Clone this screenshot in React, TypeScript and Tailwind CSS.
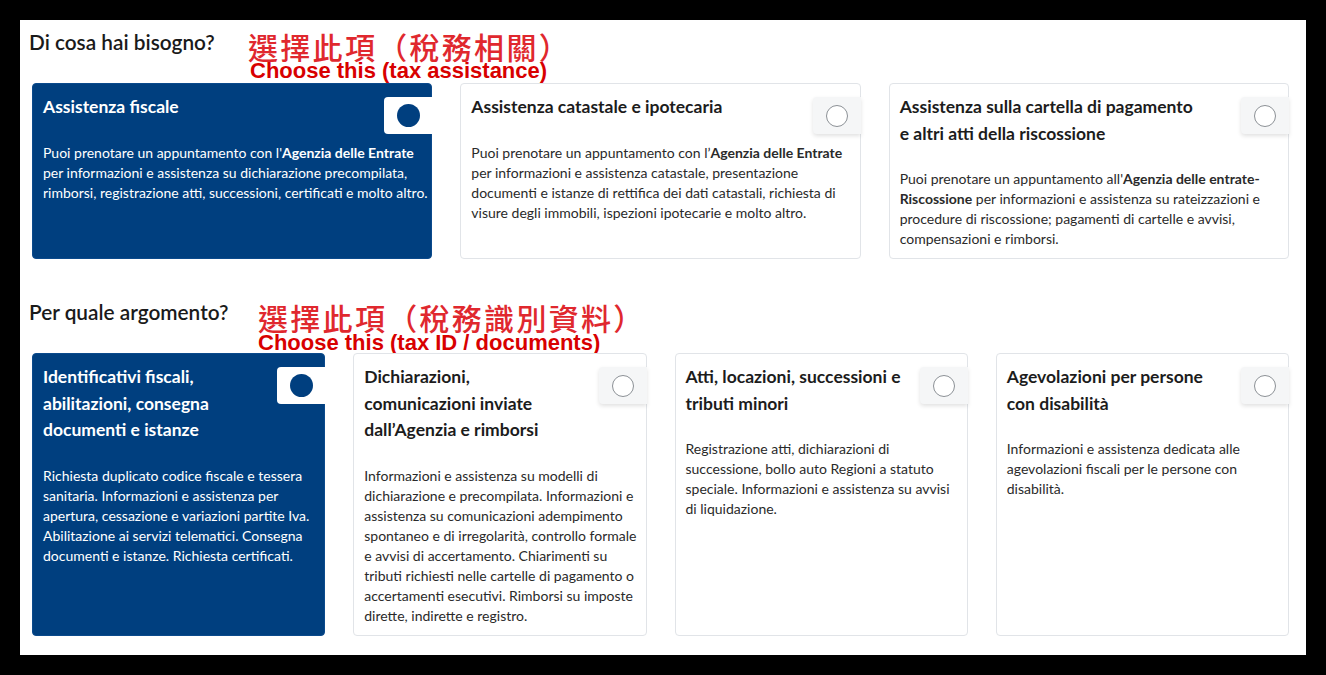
import React from "react";

type Line = React.ReactNode;
type Card = { title: string[]; desc: Line[]; selected?: boolean };

const row1: Card[] = [
  {
    selected: true,
    title: ["Assistenza fiscale"],
    desc: [
      <>Puoi prenotare un appuntamento con l'<b>Agenzia delle Entrate</b></>,
      "per informazioni e assistenza su dichiarazione precompilata,",
      "rimborsi, registrazione atti, successioni, certificati e molto altro.",
    ],
  },
  {
    title: ["Assistenza catastale e ipotecaria"],
    desc: [
      <>Puoi prenotare un appuntamento con l’<b>Agenzia delle Entrate</b></>,
      "per informazioni e assistenza catastale, presentazione",
      "documenti e istanze di rettifica dei dati catastali, richiesta di",
      "visure degli immobili, ispezioni ipotecarie e molto altro.",
    ],
  },
  {
    title: ["Assistenza sulla cartella di pagamento", "e altri atti della riscossione"],
    desc: [
      <>Puoi prenotare un appuntamento all'<b>Agenzia delle entrate-</b></>,
      <><b>Riscossione</b> per informazioni e assistenza su rateizzazioni e</>,
      "procedure di riscossione; pagamenti di cartelle e avvisi,",
      "compensazioni e rimborsi.",
    ],
  },
];

const row2: Card[] = [
  {
    selected: true,
    title: ["Identificativi fiscali,", "abilitazioni, consegna", "documenti e istanze"],
    desc: [
      "Richiesta duplicato codice fiscale e tessera",
      "sanitaria. Informazioni e assistenza per",
      "apertura, cessazione e variazioni partite Iva.",
      "Abilitazione ai servizi telematici. Consegna",
      "documenti e istanze. Richiesta certificati.",
    ],
  },
  {
    title: ["Dichiarazioni,", "comunicazioni inviate", "dall’Agenzia e rimborsi"],
    desc: [
      "Informazioni e assistenza su modelli di",
      "dichiarazione e precompilata. Informazioni e",
      "assistenza su comunicazioni adempimento",
      "spontaneo e di irregolarità, controllo formale",
      "e avvisi di accertamento. Chiarimenti su",
      "tributi richiesti nelle cartelle di pagamento o",
      "accertamenti esecutivi. Rimborsi su imposte",
      "dirette, indirette e registro.",
    ],
  },
  {
    title: ["Atti, locazioni, successioni e", "tributi minori"],
    desc: [
      "Registrazione atti, dichiarazioni di",
      "successione, bollo auto Regioni a statuto",
      "speciale. Informazioni e assistenza su avvisi",
      "di liquidazione.",
    ],
  },
  {
    title: ["Agevolazioni per persone", "con disabilità"],
    desc: [
      "Informazioni e assistenza dedicata alle",
      "agevolazioni fiscali per le persone con",
      "disabilità.",
    ],
  },
];

function CardView({ c }: { c: Card }) {
  return (
    <div
      className={
        c.selected
          ? "relative rounded-[4px] border border-[#0b4a8c] bg-[#003f7f] text-white pt-[10px] px-[10px] pb-[9px]"
          : "relative rounded-[4px] border border-[#e1e4e8] bg-white text-[#1c1c1c] pt-[10px] px-[10px] pb-[9px]"
      }
    >
      <div
        className={
          c.selected
            ? "absolute top-[13px] right-[-1px] w-[48px] h-[37px] rounded-l-[4px] bg-white flex items-center justify-center"
            : "absolute top-[13px] right-[-1px] w-[48px] h-[37px] rounded-l-[4px] bg-[#f5f6f7] shadow-[0_2px_4px_rgba(0,0,0,0.12)] flex items-center justify-center"
        }
      >
        {c.selected ? (
          <div className="w-[23px] h-[23px] rounded-full bg-[#003f7f]" />
        ) : (
          <div className="w-[22px] h-[22px] rounded-full border-[1.5px] border-[#8c9196] bg-white" />
        )}
      </div>
      <div className="text-[17.5px] leading-[26.5px] font-bold">
        {c.title.map((t, i) => (
          <span key={i} className="block whitespace-nowrap">
            {t}
          </span>
        ))}
      </div>
      <div className={c.selected ? "mt-[22px] text-[14px] leading-[20px] text-white" : "mt-[22px] text-[14px] leading-[20px] text-[#2a2a2a]"}>
        {c.desc.map((d, i) => (
          <span key={i} className="block whitespace-nowrap">
            {d}
          </span>
        ))}
      </div>
    </div>
  );
}

export default function App() {
  return (
    <div className="w-[1326px] h-[675px] bg-black pt-[20px] px-[20px] [font-family:Lato,sans-serif]">
      <div className="bg-white h-[635px] pl-[12px] pr-[17px] pt-[8px]">
        <div className="relative h-[28px]">
          <h2 className="-ml-[3px] text-[20.8px] leading-[28px] font-semibold text-[#1a1a1a]">Di cosa hai bisogno?</h2>
          <div className="absolute left-[216px] top-[3px] text-[30px] leading-[30px] tracking-[2.3px] font-medium text-[#e0282e] whitespace-nowrap [font-family:'Noto_Sans_CJK_TC',sans-serif]">
            選擇此項（稅務相關）
          </div>
          <div className="absolute left-[218px] top-[32px] text-[22px] leading-[22px] font-bold text-[#d80000] whitespace-nowrap [font-family:'Liberation_Sans',Arial,sans-serif]">
            Choose this (tax assistance)
          </div>
        </div>
        <div className="mt-[27px] grid grid-cols-3 gap-[28px]">
          {row1.map((c, i) => (
            <CardView key={i} c={c} />
          ))}
        </div>

        <div className="relative h-[28px] mt-[39px]">
          <h2 className="-ml-[3px] text-[20.8px] leading-[28px] font-semibold text-[#1a1a1a]">Per quale argomento?</h2>
          <div className="absolute left-[226px] top-[4px] text-[30px] leading-[30px] tracking-[2.3px] font-medium text-[#e0282e] whitespace-nowrap [font-family:'Noto_Sans_CJK_TC',sans-serif]">
            選擇此項（稅務識別資料）
          </div>
          <div className="absolute left-[226px] top-[34px] text-[22px] leading-[22px] font-bold text-[#d80000] whitespace-nowrap [font-family:'Liberation_Sans',Arial,sans-serif]">
            Choose this (tax ID / documents)
          </div>
        </div>
        <div className="mt-[27px] grid grid-cols-4 gap-[28px]">
          {row2.map((c, i) => (
            <CardView key={i} c={c} />
          ))}
        </div>
      </div>
    </div>
  );
}
